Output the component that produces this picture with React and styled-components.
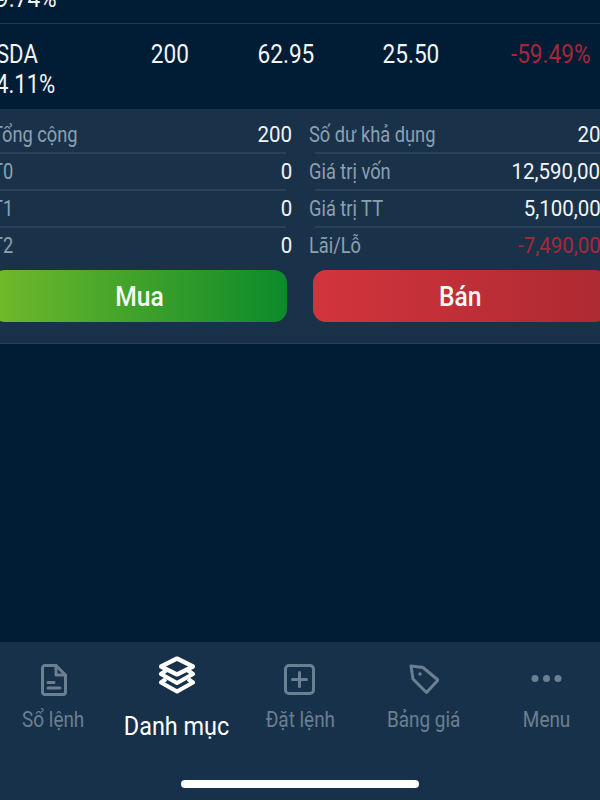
import React from "react";
import styled, { createGlobalStyle } from "styled-components";

const Global = createGlobalStyle`
  html, body { margin: 0; padding: 0; background: #011d36; overflow: hidden; }
  #root { width: 600px; height: 800px; overflow: hidden; }
`;

const Page = styled.div`
  width: 632px;
  height: 817px;
  margin: -17px 0 0 -16px;
  display: flex;
  flex-direction: column;
  background: #011d36;
  color: #f2f5f7;
  font-family: Roboto, "Noto Sans", sans-serif;
  font-size: 26px;
  line-height: 30px;
`;

/* The reference uses a condensed Roboto: narrow the installed one. */
const Narrow = styled.span`
  display: inline-block;
  white-space: nowrap;
  transform: scaleX(${(p) => p.$x || 0.87});
  transform-origin: ${(p) => p.$from || "left"} center;
`;

const Row = styled.div`
  display: grid;
  grid-template-columns: 105px 100px 125px 125px 152px;
  padding: ${(p) => (p.$partial ? "0 0 10px" : "15px 0 10px")};
  border-bottom: ${(p) => (p.$partial ? "1px solid #24394f" : "none")};
`;

const Ticker = styled.div`
  padding-left: 12px;
`;

const Num = styled.div`
  text-align: right;
  color: ${(p) => (p.$down ? "#a5283a" : "inherit")};
`;

const Summary = styled.section`
  background: #1a3249;
  border-bottom: 1px solid #2a4056;
  padding: 8px 0 21px;
`;

const Columns = styled.div`
  display: grid;
  grid-template-columns: 302px 1fr;
  column-gap: 29px;
  padding-right: 10px;
`;

const Col = styled.div`
  display: flex;
  flex-direction: column;
`;

const Line = styled.div`
  display: flex;
  justify-content: space-between;
  height: 37px;
  box-sizing: border-box;
  padding-top: 3px;
  font-size: 22px;
  border-bottom: ${(p) => (p.$last ? "none" : "2px solid #2a4159")};
`;

const Label = styled.span`
  color: #8da0b0;
  margin-left: ${(p) => p.$offset}px;
`;

const Value = styled.span`
  color: ${(p) => (p.$down ? "#a5283a" : "#f2f5f7")};
  margin-right: -6px;
`;

const Actions = styled.div`
  display: grid;
  grid-template-columns: 295px 295px;
  column-gap: 26px;
  margin: 5px 8px 0;
`;

const Action = styled.button`
  height: 52px;
  border: none;
  border-radius: 13px;
  color: #f4f8f4;
  font: 500 28px Roboto, sans-serif;
  background: ${(p) =>
    p.$buy
      ? "linear-gradient(90deg, #71b92a, #0c8a2a)"
      : "linear-gradient(90deg, #d2343c, #ad2a32)"};
`;

const Spacer = styled.div`
  flex: 1;
`;

const Nav = styled.nav`
  height: 158px;
  background: #18314a;
  padding: 14px 8px 0;
  box-sizing: border-box;
  display: flex;
  flex-direction: column;
  align-items: center;
`;

const Tabs = styled.div`
  align-self: stretch;
  display: grid;
  grid-template-columns: repeat(5, 1fr);
  height: 124px;
`;

const Tab = styled.div`
  display: flex;
  flex-direction: column;
  align-items: center;
  color: ${(p) => (p.$active ? "#ffffff" : "#6b7f92")};
  font-size: ${(p) => (p.$active ? "26px" : "22px")};
  line-height: 28px;
`;

const IconBox = styled.div`
  height: ${(p) => (p.$active ? "56px" : "42px")};
  display: flex;
  align-items: flex-start;
  padding-top: ${(p) => (p.$active ? "0" : "8px")};
`;

const HomeBar = styled.div`
  width: 238px;
  height: 8px;
  border-radius: 4px;
  background: #ffffff;
`;

const stroke = { fill: "none", stroke: "currentColor", strokeWidth: 3, strokeLinejoin: "round", strokeLinecap: "round" };

const DocIcon = () => (
  <svg width="26" height="32" viewBox="0 0 26 32" {...stroke}>
    <path d="M4 1.5h11l9.500 9.500v17a2.500 2.500 0 0 1-2.500 2.500H4A2.500 2.500 0 0 1 1.500 28V4A2.500 2.500 0 0 1 4 1.500z" />
    <path d="M15 1.500v9.500h9.500" />
    <path d="M7 18.500h6M7 24h12" />
  </svg>
);

const LayersIcon = () => (
  <svg width="38" height="38" viewBox="0 0 38 38" fill="none" stroke="currentColor" strokeWidth="4.2" strokeLinejoin="round">
    <path d="M19 2.500L35 10.500 19 18.500 3 10.500z" />
    <path d="M8 14.500L3 18 19 27 35 18l-5-3.500" />
    <path d="M8 23l-5 3.500L19 35.500l16-9-5-3.500" />
  </svg>
);

const PlusIcon = () => (
  <svg width="31" height="31" viewBox="0 0 31 31" {...stroke}>
    <rect x="1.500" y="1.500" width="28" height="28" rx="3.500" />
    <path d="M15.500 8.500v14M8.500 15.500h14" />
  </svg>
);

const TagIcon = () => (
  <svg width="31" height="31" viewBox="0 0 31 31" {...stroke}>
    <path d="M3 2l12 1.500 15 12.500-11.500 12.500L5 15z" />
    <circle cx="12" cy="10" r="1.800" fill="currentColor" stroke="none" />
  </svg>
);

const DotsIcon = () => (
  <svg width="31" height="31" viewBox="0 0 31 31" fill="currentColor">
    <circle cx="4" cy="14.500" r="3.500" />
    <circle cx="15.500" cy="14.500" r="3.500" />
    <circle cx="27" cy="14.500" r="3.500" />
  </svg>
);

const left = [
  ["Tổng cộng", "200"],
  ["T0", "0"],
  ["T1", "0"],
  ["T2", "0"],
];
const right = [
  ["Số dư khả dụng", "200"],
  ["Giá trị vốn", "12,590,000"],
  ["Giá trị TT", "5,100,000"],
  ["Lãi/Lỗ", "-7,490,000", true],
];
const tabs = [
  ["Sổ lệnh", DocIcon],
  ["Danh mục", LayersIcon, true],
  ["Đặt lệnh", PlusIcon],
  ["Bảng giá", TagIcon],
  ["Menu", DotsIcon],
];

const Cell = ({ children, down }) => (
  <Num $down={down}>
    <Narrow $from="right">{children}</Narrow>
  </Num>
);

const Column = ({ rows, offset }) => (
  <Col>
    {rows.map(([l, v, down], i) => (
      <Line key={l} $last={i === 3}>
        <Label $offset={offset}>
          <Narrow $x={0.83}>{l}</Narrow>
        </Label>
        <Value $down={down}>
          <Narrow $from="right" $x={0.93}>{v}</Narrow>
        </Value>
      </Line>
    ))}
  </Col>
);

export default function App() {
  return (
    <>
      <Global />
      <Page>
        <Row $partial>
          <Ticker>
            <Narrow>9.74%</Narrow>
          </Ticker>
        </Row>
        <Row>
          <Ticker>
            <Narrow $x={0.85}>SDA</Narrow>
            <br />
            <Narrow $x={0.85}>4.11%</Narrow>
          </Ticker>
          <Cell>200</Cell>
          <Cell>62.95</Cell>
          <Cell>25.50</Cell>
          <Cell down>-59.49%</Cell>
        </Row>
        <Summary>
          <Columns>
            <Column rows={left} offset={8} />
            <Column rows={right} offset={-6} />
          </Columns>
          <Actions>
            <Action $buy>
              <Narrow $from="center" $x={0.88}>Mua</Narrow>
            </Action>
            <Action>
              <Narrow $from="center" $x={0.88}>Bán</Narrow>
            </Action>
          </Actions>
        </Summary>
        <Spacer />
        <Nav>
          <Tabs>
            {tabs.map(([l, Icon, active]) => (
              <Tab key={l} $active={active}>
                <IconBox $active={active}>
                  <Icon />
                </IconBox>
                <Narrow $from="center" $x={active ? 0.9 : 0.86}>{l}</Narrow>
              </Tab>
            ))}
          </Tabs>
          <HomeBar />
        </Nav>
      </Page>
    </>
  );
}
